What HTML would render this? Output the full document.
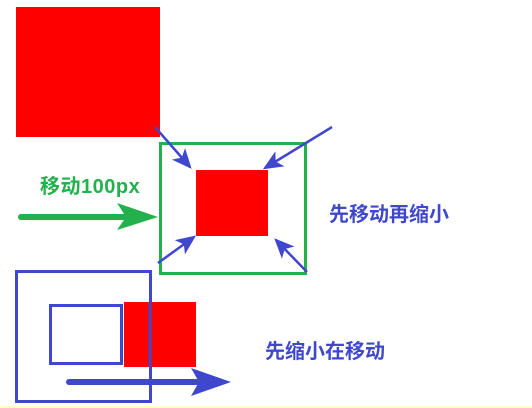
<!DOCTYPE html>
<html><head><meta charset="utf-8"><style>
body{margin:0;width:532px;height:408px;background:#fff;position:relative;overflow:hidden}
.t{position:absolute;font-family:"Liberation Sans","Noto Sans CJK SC",sans-serif;font-weight:bold;white-space:nowrap;line-height:1}
</style></head><body>
<svg width="532" height="408" style="position:absolute;left:0;top:0">
<defs>
<marker id="b" markerWidth="8" markerHeight="8" refX="7" refY="4" orient="auto" markerUnits="strokeWidth"><path d="M0,0.5 L8,4 L0,7.5 L2,4 Z" fill="#3f48cc"/></marker>
</defs>
<rect x="16" y="7" width="144" height="130" fill="#ff0000"/>
<rect x="160.5" y="143.5" width="145" height="130" fill="none" stroke="#22b14c" stroke-width="3"/>
<rect x="196" y="170" width="72" height="66" fill="#ff0000"/>
<g stroke="#3f48cc" stroke-width="2.5" fill="none">
<line x1="155" y1="127" x2="190" y2="167" marker-end="url(#b)"/>
<line x1="332" y1="127" x2="265" y2="168" marker-end="url(#b)"/>
<line x1="158" y1="263" x2="194" y2="237" marker-end="url(#b)"/>
<line x1="307" y1="272" x2="276" y2="240" marker-end="url(#b)"/>
</g>
<line x1="21" y1="217" x2="125" y2="217" stroke="#22b14c" stroke-width="6" stroke-linecap="round"/>
<path d="M117,203 L158,217 L117,230 L126,217 Z" fill="#22b14c"/>
<rect x="16.5" y="271.5" width="134" height="130" fill="none" stroke="#3f48cc" stroke-width="3"/>
<rect x="50.5" y="305.5" width="71" height="58" fill="none" stroke="#3f48cc" stroke-width="3"/>
<rect x="124" y="302" width="72" height="65" fill="#ff0000"/>
<line x1="150" y1="302" x2="150" y2="367" stroke="#3f48cc" stroke-width="3"/>
<line x1="69" y1="382" x2="200" y2="382" stroke="#3f48cc" stroke-width="6" stroke-linecap="round"/>
<path d="M191,368 L231,382 L191,396 L199,382 Z" fill="#3f48cc"/>
<line x1="0" y1="407" x2="532" y2="407" stroke="#ffff80" stroke-width="1"/>
</svg>
<div class="t" style="left:40px;top:177px;font-size:20px;color:#22b14c;letter-spacing:0.5px">移动100px</div>
<div class="t" style="left:329px;top:205px;font-size:20px;color:#3f48cc">先移动再缩小</div>
<div class="t" style="left:265px;top:342px;font-size:20px;color:#3f48cc">先缩小在移动</div>
</body></html>
